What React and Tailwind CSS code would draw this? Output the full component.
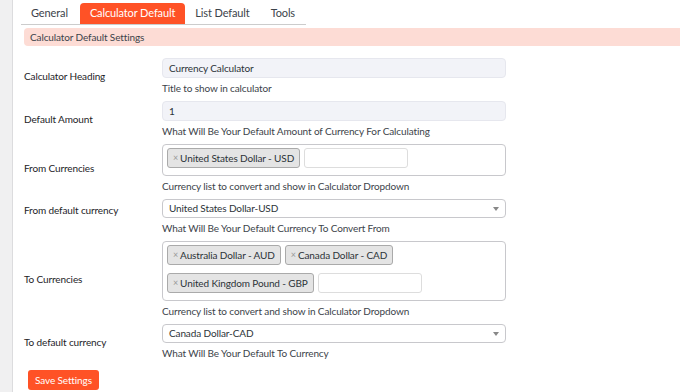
import React from "react";

const tabs = ["General", "Calculator Default", "List Default", "Tools"];

function Tag({ children }) {
  return (
    <span className="flex h-[20px] items-center rounded-[3px] border border-[#aaaaaa] bg-[#e4e4e4] px-[5px] text-[#2c3338]">
      <span className="mr-[2px] text-[9px] text-[#999999]">×</span>
      {children}
    </span>
  );
}

function Row({ label, children, desc, labelClass = "" }) {
  return (
    <div className="flex items-center pb-[6px]">
      <div className={"w-[138px] shrink-0 text-[#1d2327] " + labelClass}>{label}</div>
      <div className="flex w-[344px] flex-col">
        {children}
        <p className="mt-[3px] leading-[14px] text-[#3c434a]">{desc}</p>
      </div>
    </div>
  );
}

function Select({ value }) {
  return (
    <div className="flex h-[19px] items-center justify-between rounded-[4px] border border-[#c8c8cc] bg-white pl-[6px] pr-[6px] text-[#2c3338]">
      <span>{value}</span>
      <span className="h-0 w-0 border-x-[3px] border-t-[4px] border-x-transparent border-t-[#888888]" />
    </div>
  );
}

export default function App() {
  return (
    <div className="flex min-h-[392px] bg-white font-['Lato',sans-serif] text-[10px] tracking-[-0.12px]">
      <div className="w-[13px] shrink-0 border-r border-[#dcdcde] bg-[#f0f0f1]" />

      <div className="flex-1 pt-[3px]">
        {/* Tabs */}
        <div className="ml-[8px] flex w-[285px] border-b border-[#cccccc]">
          {tabs.map((t, i) => (
            <div
              key={t}
              className={
                "flex h-[21px] items-center whitespace-nowrap rounded-t-[4px] px-[10px] text-[11px] " +
                (i === 1 ? "ml-[2px] bg-[#ff5226] text-white" : "text-[#3c434a]") +
                (i === 3 ? " ml-[1px]" : "")
              }
            >
              {t}
            </div>
          ))}
        </div>

        <div className="ml-[11px] mt-[3px] flex h-[18px] items-center rounded-l-[4px] bg-[#fddcd5] pl-[6px] text-[#3c434a]">
          Calculator Default Settings
        </div>

        <div className="ml-[11px] mt-[12px]">
          <Row label="Calculator Heading" desc="Title to show in calculator">
            <div className="flex h-[20px] items-center rounded-[4px] border border-[#e6e7ee] bg-[#f2f3f8] pl-[6px] text-[#2c3338]">
              Currency Calculator
            </div>
          </Row>

          <Row label="Default Amount" desc="What Will Be Your Default Amount of Currency For Calculating">
            <div className="flex h-[20px] items-center rounded-[4px] border border-[#e6e7ee] bg-[#f2f3f8] pl-[6px] text-[#2c3338]">
              1
            </div>
          </Row>

          <Row label="From Currencies" desc="Currency list to convert and show in Calculator Dropdown">
            <div className="flex flex-wrap gap-x-[4px] gap-y-[8px] rounded-[4px] border border-[#c8c8cc] px-[4px] pb-[7px] pt-[3px]">
              <Tag>United States Dollar - USD</Tag>
              <div className="h-[20px] w-[104px] rounded-[3px] border border-[#dddddd] bg-white" />
            </div>
          </Row>

          <Row label="From default currency" desc="What Will Be Your Default Currency To Convert From" labelClass="pb-[14px]">
            <Select value="United States Dollar-USD" />
          </Row>

          <Row label="To Currencies" desc="Currency list to convert and show in Calculator Dropdown">
            <div className="flex flex-wrap gap-x-[4px] gap-y-[8px] rounded-[4px] border border-[#c8c8cc] px-[4px] pb-[7px] pt-[3px]">
              <Tag>Australia Dollar - AUD</Tag>
              <Tag>Canada Dollar - CAD</Tag>
              <Tag>United Kingdom Pound - GBP</Tag>
              <div className="h-[20px] w-[104px] rounded-[3px] border border-[#dddddd] bg-white" />
            </div>
          </Row>

          <Row label="To default currency" desc="What Will Be Your Default To Currency">
            <Select value="Canada Dollar-CAD" />
          </Row>

          <button className="ml-[4px] mt-[4px] h-[20px] rounded-[3px] bg-[#ff5226] px-[7px] text-[10px] text-white">
            Save Settings
          </button>
        </div>
      </div>
    </div>
  );
}
